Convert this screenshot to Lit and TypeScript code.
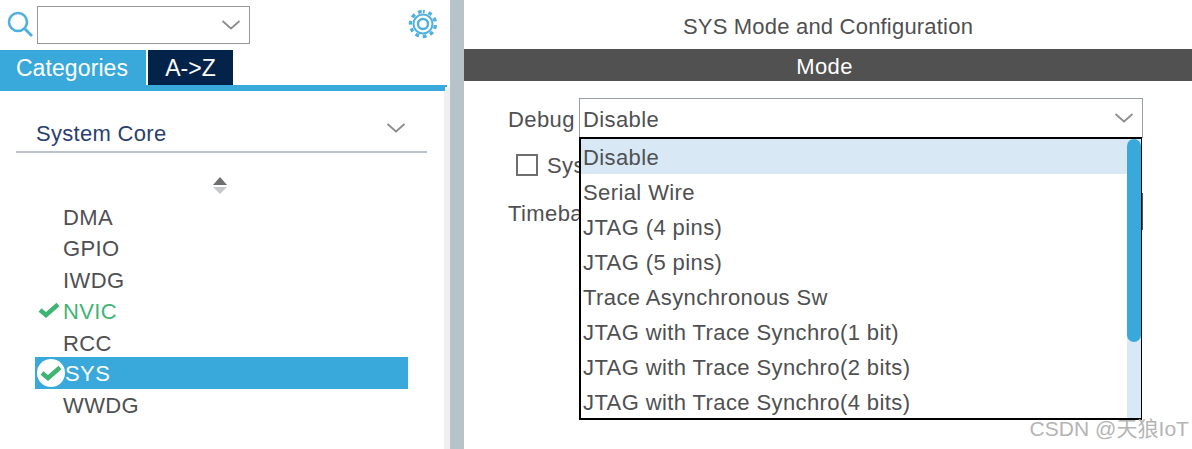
import { LitElement, html, css } from "lit";
import { customElement } from "lit/decorators.js";

const chevron = html`<svg width="20" height="12" viewBox="0 0 20 12"><path d="M1.5 2 L10 9.5 L18.5 2" fill="none" stroke="#8a8c8e" stroke-width="1.7"/></svg>`;
const tick = html`<svg width="22" height="16" viewBox="0 0 22 16"><path d="M2 8 L8 13 L20 2.5" fill="none" stroke="#3fb574" stroke-width="4.5"/></svg>`;
const options = ["Disable","Serial Wire","JTAG (4 pins)","JTAG (5 pins)","Trace Asynchronous Sw","JTAG with Trace Synchro(1 bit)","JTAG with Trace Synchro(2 bits)","JTAG with Trace Synchro(4 bits)"];
const peripherals = ["DMA","GPIO","IWDG","NVIC","RCC","SYS","WWDG"];

@customElement("app-root")
export class AppRoot extends LitElement {
  static styles = css`
    :host { display: block; width: 1192px; height: 449px; overflow: hidden; background: #fff; position: relative;
      font-family: "Liberation Sans", Arial, sans-serif; font-size: 22px; color: #4f5052; letter-spacing: 0.4px; }
    * { box-sizing: border-box; }
    .app { display: flex; height: 449px; }
    .left { width: 450px; flex: none; display: flex; flex-direction: column; }
    .search { display: flex; align-items: center; height: 50px; padding: 4px 0 4px 7px; flex: none; }
    .search svg.mag { flex: none; }
    .combo { width: 213px; height: 38px; border: 1px solid #97999b; margin-left: 4px; display: flex; align-items: center; justify-content: flex-end; padding-right: 8px; }
    .gear { margin: -3px 0 0 158px; flex: none; }
    .tabs { display: flex; height: 35px; flex: none; }
    .tab { height: 35px; display: flex; align-items: center; justify-content: center; color: #fff; font-size: 23px; letter-spacing: 0; padding-top: 2px; }
    .tab.cat { width: 146px; background: #39a9dc; padding-right: 2px; letter-spacing: 0.1px; }
    .tab.az { width: 85px; margin-left: 2px; background: #03234b; }
    .rule-top { height: 2px; background: #39a9dc; margin-right: 3px; flex: none; }
    .rule-low { height: 4px; background: #39a9dc; border-right: 5px solid #eef0f2; flex: none; }
    .body { flex: 1; border-right: 6px solid #eef0f2; }
    .group { margin: 24px 17px 0 16px; height: 38px; border-bottom: 2px solid #b8c3c9; display: flex; align-items: flex-start; justify-content: space-between; padding: 6px 21px 0 20px; color: #2b3f6e; letter-spacing: 0.3px; }
    .group svg { margin-top: 1px; }
    .stepper { display: flex; flex-direction: column; align-items: center; gap: 2px; margin: 24px 0 0 220px; width: 0; }
    .stepper i { display: block; flex: none; width: 0; height: 0; border-left: 7px solid transparent; border-right: 7px solid transparent; }
    .stepper .up { border-bottom: 8px solid #6d6e70; }
    .stepper .down { border-top: 7px solid #c6c8ca; }
    .list { margin: 7px 36px 0 35px; display: flex; flex-direction: column; }
    .item { height: 31.5px; display: flex; align-items: center; padding: 2px 0 0 28px; position: relative; }
    .item.ok { color: #3fb574; }
    .item.sel { background: #39a9dc; color: #fff; padding-left: 30px; height: 32px; margin: -2px 0 1px; }
    .tick { position: absolute; left: 3px; top: 6px; display: flex; }
    .disc { position: absolute; left: 2px; top: 2px; width: 28px; height: 28px; border-radius: 50%; background: #fff; display: flex; align-items: center; justify-content: center; }
    .split { width: 14px; flex: none; background: #b8c3c9; }
    .right { flex: 1; display: flex; flex-direction: column; position: relative; }
    .title { height: 49px; display: flex; align-items: center; justify-content: center; padding-top: 4px; letter-spacing: 0.2px; }
    .modebar { height: 32px; background: #505150; color: #fff; display: flex; align-items: center; justify-content: center; padding: 3px 7px 0 0; }
    .form { padding: 17px 49px 0 44px; display: flex; flex-direction: column; }
    .row { display: flex; align-items: center; }
    .row.debug { height: 40px; }
    .lbl { width: 71px; flex: none; padding-top: 3px; }
    .select { width: 564px; height: 40px; border: 1px solid #97a0a8; display: flex; align-items: center; justify-content: space-between; padding: 0 8px 0 3px; }
    .select span { padding-top: 3px; }
    .row.sys { height: 24px; margin-top: 15px; padding-left: 8px; gap: 9px; }
    .sys-text { padding-top: 2px; }
    .check { width: 22px; height: 22px; border: 2px solid #6d6e70; flex: none; }
    .row.time { margin-top: 23px; height: 26px; padding-top: 2px; }
    .drop { position: absolute; left: 115px; top: 137px; width: 563px; height: 283px; background: #fff; border: 2px solid #000; border-right-width: 1px; overflow: hidden; display: flex; }
    .opts { flex: 1; display: flex; flex-direction: column; }
    .opt { height: 35px; flex: none; display: flex; align-items: center; padding: 2px 0 0 2px; }
    .opt.on { background: #d9e8f5; }
    .track { width: 14px; flex: none; background: #d9e8f5; }
    .thumb { height: 203px; background: #39a9dc; border-radius: 7px; }
    .mark { position: absolute; right: 3px; bottom: 7px; font-size: 21px; color: #b4b4b4; letter-spacing: 0.05px; font-family: "Liberation Sans", "Noto Sans CJK SC", sans-serif; }
    .edge { position: absolute; left: 678px; top: 193px; width: 1px; height: 37px; background: #505150; }
  `;

  render() {
    return html`
      <div class="app">
        <div class="left">
          <div class="search">
            <svg class="mag" width="26" height="28" viewBox="0 0 26 28"><circle cx="11" cy="11" r="9" fill="none" stroke="#4fb0df" stroke-width="2.6"/><path d="M18 18 L25 25" stroke="#4fb0df" stroke-width="3"/></svg>
            <div class="combo">${chevron}</div>
            <svg class="gear" width="30" height="30" viewBox="0 0 30 30">
              <g fill="none" stroke="#4fb0df">
                <circle cx="15" cy="15" r="9.5" stroke-width="2"/>
                <circle cx="15" cy="15" r="5" stroke-width="2.4"/>
                <path stroke-width="3.4" stroke-dasharray="3.7 3.74" stroke-dashoffset="1.85" d="M15 2.5 a12.5 12.5 0 1 1 -0.01 0"/>
              </g>
            </svg>
          </div>
          <div class="tabs"><div class="tab cat">Categories</div><div class="tab az">A-&gt;Z</div></div>
          <div class="rule-top"></div>
          <div class="rule-low"></div>
          <div class="body">
            <div class="group"><span>System Core</span>${chevron}</div>
            <div class="stepper"><i class="up"></i><i class="down"></i></div>
            <div class="list">
              ${peripherals.map((p) => html`
                <div class="item ${p === "NVIC" ? "ok" : ""} ${p === "SYS" ? "sel" : ""}">
                  ${p === "NVIC" ? html`<span class="tick">${tick}</span>` : ""}
                  ${p === "SYS" ? html`<span class="disc">${tick}</span>` : ""}
                  ${p}
                </div>`)}
            </div>
          </div>
        </div>
        <div class="split"></div>
        <div class="right">
          <div class="title">SYS Mode and Configuration</div>
          <div class="modebar">Mode</div>
          <div class="form">
            <div class="row debug"><span class="lbl">Debug</span><div class="select"><span>Disable</span>${chevron}</div></div>
            <div class="row sys"><span class="check"></span><span class="sys-text">Sys</span></div>
            <div class="row time">Timeba</div>
          </div>
          <div class="edge"></div>
          <div class="drop">
            <div class="opts">${options.map((o, i) => html`<div class="opt ${i === 0 ? "on" : ""}">${o}</div>`)}</div>
            <div class="track"><div class="thumb"></div></div>
          </div>
        </div>
      </div>
      <div class="mark">CSDN @天狼IoT</div>
    `;
  }
}
